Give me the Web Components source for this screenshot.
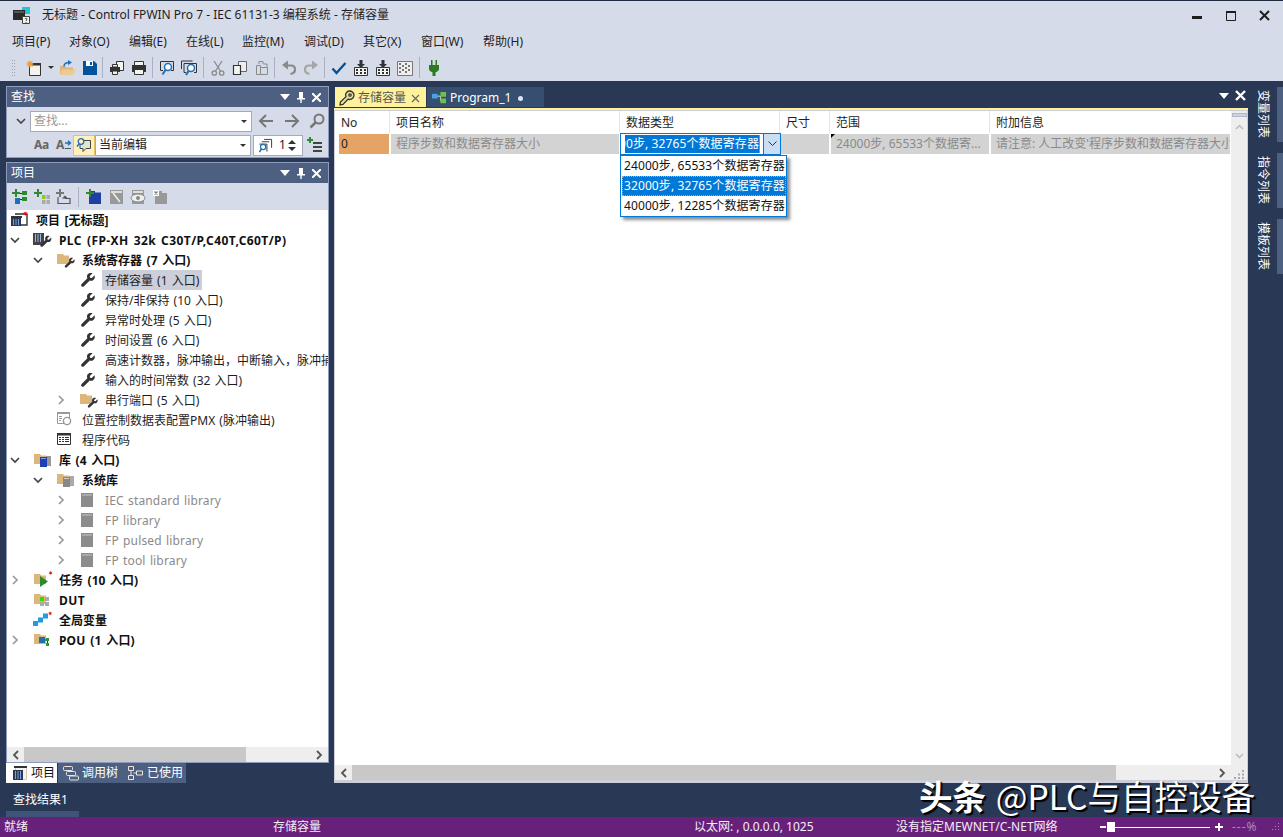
<!DOCTYPE html>
<html lang="zh">
<head>
<meta charset="utf-8">
<title>Control FPWIN Pro 7</title>
<style>
  html, body { margin: 0; padding: 0; }
  body {
    width: 1283px; height: 837px; overflow: hidden; background: #293955;
    display: grid; grid-template-rows: 30px 24px 27px 702px 34px 20px;
    font: 12px/1.2 "Noto Sans", "Noto Sans CJK SC", sans-serif; color: #1e1e1e;
  }
  fp-watermark b { font-weight: 700; margin-right: 2px; }
</style>
</head>
<body>
<fp-titlebar>无标题 - Control FPWIN Pro 7 - IEC 61131-3 编程系统 - 存储容量</fp-titlebar>
<fp-menubar></fp-menubar>
<fp-toolbar></fp-toolbar>
<fp-workspace>
  <fp-find-panel slot="left"></fp-find-panel>
  <fp-project-panel slot="left"></fp-project-panel>
  <fp-doc-well slot="doc"></fp-doc-well>
  <fp-side-rail slot="rail"></fp-side-rail>
</fp-workspace>
<fp-bottom-dock></fp-bottom-dock>
<fp-statusbar></fp-statusbar>
<fp-watermark><b>头条</b> @PLC与自控设备</fp-watermark>

<script>
const FOLDER = '<path fill="#dcb67a" d="M1 3h6l1 1.500h5V13H1z"/>';
const WRENCH = d => `<path fill="${d}" d="M14.500 3.200l-2.700 2.700-1.800-.2-.2-1.700 2.800-2.700C10.600.5 8.300 1 7.400 2.800c-.6 1.200-.5 2.500 0 3.400l-5.800 5.700c-.7.8-.7 1.800 0 2.400.7.7 1.700.7 2.400 0l5.800-5.700c1.200.4 2.600.3 3.600-.6 1.300-1 1.800-3.100 1.100-4.800z"/>`;
const SMALL_WRENCH = `<g transform="translate(8 6) scale(.72)">${WRENCH('#333')}</g>`;
const PLUS = '<path fill="#2d8a2d" d="M3 0h2v3h3v2H5v3H3V5H0V3h3z"/>';
const ICONS = {
  // tree
  project: '<path fill="none" stroke="#333" stroke-width="1.400" d="M4 3h12v11H9"/><path fill="#333" d="M0 5h11v2H0z"/><path fill="#293955" d="M0 7h10v8H0z"/><path stroke="#7f9fe0" d="M2.500 8v6M5 8v6M7.500 8v6"/><path fill="#e51400" d="M14 0l.6 1.600 1.600-.5-.9 1.400 1.200 1.100-1.700.1L14.500 5l-.8-1.300-1.700-.1 1.200-1.100-.9-1.400 1.600.5z"/>',
  plc: `<path fill="#444" d="M0 2h11v12H0z"/><path stroke="#9db4e8" d="M2.500 3v8M5 3v8M7.500 3v8"/><g transform="translate(6.500 4) scale(.8)">${WRENCH('#333')}</g>`,
  folderWrench: FOLDER + SMALL_WRENCH,
  wrench: WRENCH('#333'),
  pmx: '<path fill="none" stroke="#999" d="M1.500 1.500h12v11h-12z"/><path fill="#999" d="M1 1h13v2H1zM3 5h3v1H3zM3 7h3v1H3zM3 9h2v1H3z"/><circle cx="11" cy="10" r="3.600" fill="#fff" stroke="#999" stroke-width="1.400"/>',
  code: '<path fill="#fff" stroke="#333" d="M1.500 2.500h13v11h-13z"/><path fill="#333" d="M1 2h14v2.500H1zM3 6h2v1H3zM6 6h2v1H6zM9 6h4v1H9zM3 8h2v1H3zM6 8h2v1H6zM9 8h4v1H9zM3 10h2v1H3zM6 10h2v1H6zM9 10h4v1H9z"/>',
  libRoot: FOLDER + '<path fill="#999" d="M13 5h5v10h-5z"/><path fill="#1f3fb5" d="M7 6h7v10H7z"/><path fill="#7f9fe0" d="M8 7h5v1H8z"/>',
  libSys: FOLDER + '<path fill="#aaa" d="M13 5h5v10h-5z"/><path fill="#888" d="M7 6h7v10H7z"/><path fill="#ccc" d="M8 7h5v1H8z"/>',
  book: '<path fill="#8c8c8c" d="M1 1h12v14H1z"/><path fill="#c4c4c4" d="M2 2.500h10v1H2z"/>',
  task: FOLDER + '<path fill="#2d8a2d" d="M7 5l8 5.500-8 5.500z"/><path fill="#e51400" d="M17 0l.5 1.400 1.400-.4-.8 1.200 1 1-1.400.1-.4 1.300-.6-1.200-1.500-.1 1-1-.8-1.200 1.400.4z" transform="translate(.5 -.5)"/>',
  dut: FOLDER + '<path fill="#33dd00" d="M7 6h4v4H7z"/><path fill="#aaa" d="M12 6h4v4h-4zM7 11h4v4H7zM12 11h4v4h-4z"/>',
  global: '<path fill="#1f9be0" d="M0 10h5v5H0zM5 6.500h5v5H5zM10 2.500h5v5h-5z"/><path fill="#e51400" d="M17 0l.5 1.400 1.400-.4-.8 1.200 1 1-1.400.1-.4 1.300-.6-1.200-1.500-.1 1-1-.8-1.200 1.400.4z"/>',
  pou: FOLDER + '<path fill="#1f6fb5" d="M6 6h6v6H6z"/><path stroke="#333" fill="none" d="M12 9h2.500v5"/><path fill="#2d9a2d" d="M13 7h3v3h-3zM13 12h3v3h-3z"/>',
  // toolbar
  new: '<path fill="#f4f4ee" stroke="#333" d="M3.500 3.500h11v12h-11z"/><path fill="#333" d="M6 3h9v2.500H6z"/><path fill="#e8a33d" d="M4 0l.9 2 2-.9-.9 2 2 .9-2 .9.9 2-2-.9-.9 2-.9-2-2 .9.9-2-2-.9 2-.9-.9-2 2 .9z"/>',
  open: '<path fill="#dcb67a" d="M0 6h5l1 1.500h7V15H0z"/><path fill="#eacb95" d="M2 9.500h14L13.500 15H0z"/><path fill="none" stroke="#1f6fb5" stroke-width="1.500" d="M4 6.500C4 3.500 6 2.500 9 2.500"/><path fill="#1f6fb5" d="M8 0l4 2.500L8 5z"/>',
  save: '<path fill="#00539c" d="M1 1h11l3 3v11H1z"/><path fill="#fff" d="M4 1h7v5H4z"/><path fill="#00539c" d="M8 2h2v3H8z"/>',
  exportPrint: '<path fill="#f4f4ee" stroke="#333" d="M7.500 1.500h7v9h-7z"/><path fill="#333" d="M1 7h10v5H1z"/><path fill="#f4f4ee" stroke="#333" d="M3.500 4.500h5v2.500h-5zM3.500 11h5v3.500h-5z"/>',
  print: '<path fill="#f4f4ee" stroke="#333" d="M3.500 1.500h9v4h-9z"/><path fill="#333" d="M1 5h14v7H1z"/><path fill="#f4f4ee" stroke="#333" d="M3.500 9.500h9v5h-9z"/>',
  find: '<path fill="none" stroke="#333" d="M1.500 1.500h13v9H12M1.500 1.500v9H4"/><circle cx="9" cy="7" r="3.500" fill="#fff" stroke="#1f6fb5" stroke-width="1.500"/><path stroke="#1f6fb5" stroke-width="2" d="M6.500 10L3.500 14.500"/>',
  find2: '<path fill="none" stroke="#333" d="M.5 1h11M.5 1v8M3 3.500h12.500v9H13M3 3.500v9h2"/><circle cx="10" cy="8" r="3.500" fill="#fff" stroke="#1f6fb5" stroke-width="1.500"/><path stroke="#1f6fb5" stroke-width="2" d="M7.500 11L5 15"/>',
  cut: '<g fill="none" stroke="#8a8a8a" stroke-width="1.300"><path d="M4 1l6.500 10M12 1L5.500 11"/><circle cx="4.300" cy="13" r="2.200"/><circle cx="11.700" cy="13" r="2.200"/></g>',
  copy: '<path fill="#eee" stroke="#666" d="M6.500 1.500h8v10h-8z"/><path fill="#f4f4ee" stroke="#333" stroke-width="1.200" d="M1.500 5.500h7v9h-7z"/>',
  paste: '<path fill="none" stroke="#8a8a8a" d="M2.500 5.500h4v9h-4zM6.500 7.500h7v7h-7z"/><path fill="none" stroke="#8a8a8a" d="M5 4V1.500h4V4M9.500 4h3.500v3"/>',
  undo: '<path fill="none" stroke="#8a8a8a" stroke-width="2.200" d="M3.500 5.500h6.500c3 0 4 2 4 4 0 2.500-2 4-4.500 4.500"/><path fill="#8a8a8a" d="M7 .5v9L1 5z"/>',
  redo: '<path fill="none" stroke="#a5a5a5" stroke-width="2.200" d="M12.500 5.500H6c-3 0-4 2-4 4 0 2.500 2 4 4.500 4.500"/><path fill="#a5a5a5" d="M9 .5v9L15 5z"/>',
  check: '<path fill="none" stroke="#00539c" stroke-width="2.400" d="M1.500 8.500l4 4.500 9-10"/>',
  chipDown: '<path fill="#f4f4ee" stroke="#333" d="M1.500 7.500h13v8h-13z"/><path fill="#333" d="M3 9h2v2H3zM7 9h2v2H7zM11 9h2v2h-2zM3 12h2v2H3zM7 12h2v2H7zM11 12h2v2h-2zM6.500 0h3v4H12L8 8 4 4h2.500z"/>',
  chipGray: '<path fill="#eee" stroke="#777" d="M.5 1.500h15v14H.5z"/><g fill="#777"><path d="M2 3h2v2H2zM5 5h2v2H5zM8 3h2v2H8zM11 5h2v2h-2zM2 7h2v2H2zM8 7h2v2H8zM5 9h2v2H5zM11 9h2v2h-2zM2 11h2v2H2zM8 11h2v2H8z"/></g>',
  plug: '<path fill="#2d7a1f" d="M5 0h1.500v5H5zM9.500 0H11v5H9.500zM3 5h10v4c0 1.500-1.500 3-3.500 3.300V16h-3v-3.700C4.500 12 3 10.500 3 9z"/>',
  // find panel
  back: '<path fill="none" stroke="#777" stroke-width="2" d="M15 8H2M8 2L2 8l6 6"/>',
  forward: '<path fill="none" stroke="#777" stroke-width="2" d="M1 8h13M8 2l6 6-6 6"/>',
  mag: '<circle cx="10" cy="6" r="4.500" fill="none" stroke="#777" stroke-width="2"/><path stroke="#777" stroke-width="2.500" d="M6.500 9.500L1.500 14.500"/>',
  scope: '<path fill="#e3e6cf" stroke="#444" d="M4 3.500h10.500v8H10L7 14.500v-3H4z"/><circle cx="5" cy="4.500" r="2.800" fill="#fff0c0" stroke="#1f6fb5" stroke-width="1.300"/><path stroke="#1f6fb5" stroke-width="1.500" d="M3 7L1 9.500"/>',
  stack: '<path fill="none" stroke="#333" d="M6.500 1.500h8v9M4 4h8M1.500 6.500h8v8"/><circle cx="5.500" cy="9.500" r="2.800" fill="#fff" stroke="#1f6fb5" stroke-width="1.300"/><path stroke="#1f6fb5" stroke-width="1.600" d="M3.500 12L1.500 15"/>',
  addList: '<path fill="#2d8a2d" d="M2 0h2v2h2v2H4v2H2V4H0V2h2z"/><path fill="#444" d="M6 5h9v2H6zM6 9h9v2H6zM6 13h9v2H6z"/>',
  // project toolbar
  treeExpand: PLUS + '<path fill="#2d8a2d" d="M10 2h5v4h-5zM10 8h5v4h-5z"/><path fill="#1f6fb5" d="M3 9h5v6H3z"/><path fill="#333" d="M8 4h2v1H8zM8 10h2v1H8z"/>',
  treeAdd: PLUS + '<path fill="#88cc22" d="M8 6h3.500v4H8z"/><path fill="#aaa" d="M12.500 6H16v4h-3.500zM8 11h3.500v4H8zM12.500 11H16v4h-3.500z"/>',
  treeUp: '<path fill="#777" d="M3 0h2v3h3v2H5v3H3V5H0V3h3z"/><path fill="none" stroke="#555" stroke-width="1.200" d="M2 8v6.500h12V9.500H9"/><path fill="#555" d="M9 6.500l3 3H6z"/>',
  newDoc: '<path fill="#1f3fa5" d="M3 2h12v13H3z"/>' + PLUS + '<path fill="#d6dbe9" d="M9 2h6v1.500H9z"/>',
  grayEdit: '<path fill="#999" d="M2 1h13v14H2z"/><path fill="#ddd" d="M3 2h11v2H3z"/><path fill="none" stroke="#eee" stroke-width="1.500" d="M5 4l7 9"/>',
  grayEye: '<path fill="#999" d="M2 1h12v14H2z"/><path fill="#ddd" d="M3 2h10v2H3z"/><ellipse cx="8" cy="9" rx="7" ry="4" fill="#eee" stroke="#888"/><circle cx="8" cy="9" r="2" fill="#888"/>',
  grayDel: '<path fill="#999" d="M3 2h12v13H3z"/><path fill="#d6dbe9" d="M10 2h5v2h-5z"/><path fill="#fff" d="M1 1h6v6H1z"/><path stroke="#777" stroke-width="1.300" d="M2.500 2.500l3 3M5.500 2.500l-3 3"/>',
  // tabs
  tabProject: '<path fill="#f4f4ee" stroke="#d8c8bc" d="M3.500 1.500h11v13h-11z"/><path fill="#333" d="M2 1h13v2H2z"/><path fill="#293955" d="M1 5h10v10H1z"/><path stroke="#7f9fe0" d="M3.500 6v8M6 6v8M8.500 6v8"/>',
  tabCall: '<g fill="#4d6082" stroke="#eee4dc"><rect x=".5" y="1.500" width="9" height="4" rx="1"/><rect x="3.500" y="6.500" width="9" height="4" rx="1"/><rect x="6.500" y="11" width="9" height="4" rx="1"/></g>',
  tabUsed: '<g fill="#4d6082" stroke="#eee4dc"><path d="M1.500 1.500h5v4h-5zM1.500 10.500h5v4h-5zM9.500 6h6v4h-6z"/><path fill="none" d="M4 5.500v5M6.500 8h3"/></g>',
  key: '<g stroke="#333" stroke-width="1.300"><path fill="#e8e0a0" d="M10.500 1c2.500 0 4.500 2 4.500 4.200 0 2.300-2 4.300-4.300 4.300-.6 0-1.200-.2-1.600-.4L4 14.500l-3 .5.400-2.900 5.600-5.500c-.3-.6-.4-1.200-.4-1.800C6.600 3 8.400 1 10.500 1z"/><circle cx="11" cy="5" r="1.200" fill="#fff29d"/></g>',
  ladder: '<path fill="#4aa3e0" d="M0 3h6v5H0z"/><path fill="none" stroke="#ddd" d="M6 5.500h3M9 5.500v5"/><path fill="#6cc24a" d="M9 1h6v5H9zM9 8h6v5H9z"/>'
};

function defineEl(name, css, html) {
  customElements.define(name, class extends HTMLElement {
    connectedCallback() {
      if (this.shadowRoot) return;
      const root = this.attachShadow({ mode: 'open' });
      const body = typeof html === 'function' ? html(this) : html;
      root.innerHTML = `<style>${css}</style>${body}`;
    }
  });
}

// small svg icon, size in px
defineEl('fp-icon',
  `:host{display:inline-flex;flex:none;line-height:0}`,
  el => {
    const w = el.getAttribute('w') || 16, h = el.getAttribute('h') || w;
    const vb = el.getAttribute('vb') || '0 0 16 16';
    return `<svg width="${w}" height="${h}" viewBox="${vb}">${ICONS[el.getAttribute('name')] || ''}</svg>`;
  });

defineEl('fp-titlebar',
  `:host{display:flex;align-items:center;background:#d6dbe9;border-top:1px solid #1d2a3f;box-sizing:border-box;padding:0 1.500px 0 13px;color:#1e1e1e}
   .logo{width:17px;height:17px;margin-right:12px}
   .t{flex:1}
   .b{display:flex;align-items:center;width:34px;justify-content:center}
   svg{display:block}`,
  `<svg class="logo" viewBox="0 0 17 17"><path fill="#1cc7d8" d="M9 0h8v7H9z"/><path fill="#2a2a2a" d="M0 3h12v10H0z"/><path fill="#555" d="M1 4h10v2H1z"/><path fill="#f4f4ee" stroke="#444" d="M9.500 9.500h7v7h-7z"/><path stroke="#444" fill="none" d="M12 12c0-1 2-1 2 0s-1 1-1 2M13 15v1"/></svg>
   <span class="t"><slot></slot></span>
   <span class="b"><svg width="10" height="3" style="margin-top:3px"><path d="M0 0h10v3H0z" fill="#1e1e1e"/></svg></span>
   <span class="b"><svg width="10" height="10" viewBox="0 0 10 10"><path fill="none" stroke="#1e1e1e" d="M.5 .5h9v9h-9z"/><path fill="#1e1e1e" d="M0 0h10v2H0z"/></svg></span>
   <span class="b"><svg width="11" height="11"><path stroke="#1e1e1e" stroke-width="2" d="M1 1l9 9M10 1l-9 9"/></svg></span>`);

defineEl('fp-menubar',
  `:host{display:flex;align-items:center;background:#d6dbe9;padding:1px 0 0 12px;color:#1e1e1e}
   span{white-space:nowrap}`,
  [['项目(P)',57],['对象(O)',60],['编辑(E)',57],['在线(L)',56],['监控(M)',62],['调试(D)',59],['其它(X)',58],['窗口(W)',62],['帮助(H)',50]]
    .map(([t, w]) => `<span style="width:${w}px">${t}</span>`).join(''));

defineEl('fp-toolbar',
  `:host{display:flex;align-items:center;gap:6px;background:#d6dbe9;padding:0 0 0 11px}
   .grip{width:5px;height:18px;margin-right:4px;background-image:radial-gradient(#8c94a8 .7px,transparent .8px);background-size:2.500px 3px}
   .s{width:1px;height:21px;background:#aab0c2}
   .a{width:6px;height:10px;display:flex;align-items:center}
   .a::before{content:"";border:3px solid transparent;border-top:3px solid #333;border-bottom:0}`,
  (() => {
    const i = n => `<fp-icon name="${n}"></fp-icon>`;
    const s = m => `<span class="s" style="margin-left:${m}px"></span>`;
    return `<span class="grip"></span>${i('new')}<span class="a"></span>${i('open')}${i('save')}${s(-2)}${i('exportPrint')}${i('print')}${s(-1)}${i('find')}${i('find2')}${s(0)}${i('cut')}${i('copy')}${i('paste')}${s(-2)}${i('undo')}${i('redo')}${s(-1)}${i('check')}${i('chipDown')}${i('chipDown')}${i('chipGray')}${s(0)}${i('plug')}`;
  })());

defineEl('fp-workspace',
  `:host{display:grid;grid-template-columns:334px 914px 35px;min-height:0}
   .left{display:flex;flex-direction:column;gap:4px;padding:5px 5px 0 6px;min-height:0;height:100%;box-sizing:border-box}
   .doc,.rail{min-height:0;height:100%;box-sizing:border-box;display:flex;flex-direction:column}`,
  `<div class="left"><slot name="left"></slot></div><div class="doc"><slot name="doc"></slot></div><div class="rail"><slot name="rail"></slot></div>`);

// title bar of a tool window
defineEl('fp-panel-head',
  `:host{display:flex;align-items:center;height:20px;background:#4d6082;color:#fff;padding:0 7px 0 4px;flex:none}
   .t{flex:1}
   svg{display:block}
   .i{margin-left:7px}`,
  `<span class="t"><slot></slot></span>
   <svg class="i" width="10" height="6"><path fill="#fff" d="M0 0h10L5 6z"/></svg>
   <svg class="i" width="8" height="11"><path fill="#fff" d="M2 0h4v6h2v1.500H4.700V11H3.300V7.500H0V6h2z"/></svg>
   <svg class="i" width="9" height="9"><path stroke="#fff" stroke-width="2" d="M0 0l9 9M9 0L0 9"/></svg>`);

defineEl('fp-find-panel',
  `:host{display:flex;flex-direction:column;height:72px;flex:none;border:1px solid #8e9bbc;box-sizing:border-box;background:#d6dbe9}
   .row{display:flex;align-items:center;height:22px;position:relative}
   .r1{margin-top:3px}
   .r2{margin-top:2px}
   .chev{width:12px;margin-left:8px;margin-right:3px}
   .box{background:#fff;border:1px solid #a4a9bb;box-sizing:border-box;height:21px;display:flex;align-items:center;padding-left:3px}
   .box .tx{flex:1}
   .drop{border:3px solid transparent;border-top:3px solid #333;border-bottom:0;margin-right:4px}
   .ph{color:#999}
   .aa{font-weight:700;color:#666;font-size:12px;width:22px;text-align:left;letter-spacing:-.3px;display:flex;align-items:center}
   .scope{width:22px;height:21px;background:#fff0c0;border:1px solid #e5c365;box-sizing:border-box;display:flex;align-items:center;justify-content:center}
   .spin{width:50px;background:#fff;border:1px solid #a4a9bb;box-sizing:border-box;height:21px;display:flex;align-items:center;padding-left:4px;margin-left:2px}
   svg{display:block}`,
  `<fp-panel-head>查找</fp-panel-head>
   <div class="row r1">
     <svg class="chev" width="10" height="6" viewBox="0 0 10 6"><path fill="none" stroke="#444" stroke-width="1.600" d="M1 1l4 4 4-4"/></svg>
     <div class="box" style="width:222px"><span class="tx ph">查找...</span><span class="drop"></span></div>
     <fp-icon name="back" style="margin-left:6px"></fp-icon>
     <fp-icon name="forward" style="margin-left:10px"></fp-icon>
     <fp-icon name="mag" style="margin-left:9px"></fp-icon>
   </div>
   <div class="row r2">
     <span class="aa" style="margin-left:27px">Aa</span>
     <span class="aa" style="margin-right:-4px">A<svg width="7" height="10" style="margin-left:1px"><path fill="none" stroke="#1f6fb5" stroke-width="1.300" d="M0 3h5M3 .8L5.500 3 3 5.200"/><path stroke="#555" d="M0 8.500h6"/></svg></span>
     <span class="scope" style="margin-left:-1px"><fp-icon name="scope"></fp-icon></span>
     <div class="box" style="width:156px"><span class="tx">当前编辑</span><span class="drop"></span></div>
     <div class="spin"><fp-icon name="stack" w="15"></fp-icon><span style="margin-left:6px;flex:1">1</span>
       <svg width="8" height="13" style="margin-right:6px"><path fill="#333" d="M0 5l4-4 4 4zM0 8l4 4 4-4z"/></svg></div>
     <fp-icon name="addList" style="margin-left:4px"></fp-icon>
   </div>`);

defineEl('fp-tree-row',
  `:host{display:flex;align-items:center;height:20px;white-space:nowrap;flex:none}
   .c{width:16px;flex:none;display:flex;justify-content:center}
   .l{padding:3px 3px 1px;line-height:16px;word-spacing:1px}
   :host([bold]) .l{font-weight:700;color:#111;word-spacing:1.500px}
   :host([gray]) .l{color:#8a8a8a;letter-spacing:.15px}
   :host([sel]) .l{background:#ccced9}
   svg{display:block}`,
  el => {
    const lv = +el.getAttribute('level');
    const chev = el.getAttribute('chev');
    const icon = el.getAttribute('icon');
    const ls = el.getAttribute('ls');
    const iw = icon === 'wrench' || icon === 'book' ? 16 : 20;
    const vb = iw === 20 ? '0 0 20 18' : '0 0 16 16';
    const ih = iw === 20 ? 18 : 16;
    const chevSvg = chev === 'open'
      ? '<svg width="10" height="7"><path fill="none" stroke="#444" stroke-width="1.700" d="M1 1l4 4 4-4"/></svg>'
      : chev === 'closed'
      ? '<svg width="7" height="10"><path fill="none" stroke="#999" stroke-width="1.700" d="M1 1l4 4-4 4"/></svg>' : '';
    const pad = lv === 0 ? 4 : 23 * lv - 23;
    const iconMl = lv === 0 ? 0 : (iw === 20 ? 10 : 11);
    const lblMl = lv === 0 ? 2 : (iw === 20 ? 3 : 6);
    return `<span style="width:${pad}px;flex:none"></span>` +
      (lv === 0 ? '' : `<span class="c">${chevSvg}</span>`) +
      `<fp-icon name="${icon}" w="${iw}" h="${ih}" vb="${vb}" style="margin-left:${iconMl}px"></fp-icon>` +
      `<span class="l" style="margin-left:${lblMl}px${ls ? ';letter-spacing:' + ls + 'px' : ''}"><slot></slot></span>`;
  });

defineEl('fp-hscroll',
  `:host{display:flex;align-items:center;height:15px;background:#eeeeef;flex:none}
   .th{background:#c8c8c8;height:100%}
   .sp{flex:1}
   svg{display:block;flex:none}`,
  el => {
    const w = el.getAttribute('thumb');
    return `<span style="width:17px;flex:none;display:flex;justify-content:center"><svg width="7" height="10"><path fill="none" stroke="#555" stroke-width="1.800" d="M6 1L2 5l4 4"/></svg></span>
    <span class="th" style="width:${w}px"></span><span class="sp"></span>
    <span style="width:17px;flex:none;display:flex;justify-content:center"><svg width="7" height="10"><path fill="none" stroke="#555" stroke-width="1.800" d="M1 1l4 4-4 4"/></svg></span>`;
  });

defineEl('fp-project-panel',
  `:host{display:flex;flex-direction:column;flex:1;min-height:0}
   .frame{flex:1;display:flex;flex-direction:column;border:1px solid #8e9bbc;min-height:0;background:#fff}
   .tb{display:flex;align-items:center;gap:6px;height:27px;background:#d6dbe9;padding-left:5px;flex:none}
   .s{width:1px;height:20px;background:#aab0c2;margin:0 1px 0 0}
   .tree{flex:1;display:flex;flex-direction:column;overflow:hidden;min-height:0;color:#1e1e1e}
   .tabs{display:flex;height:20px;flex:none}
   .tab{display:flex;align-items:center;height:20px;box-sizing:border-box;background:#4d6082;color:#fff;white-space:nowrap}
   .on{background:#fff;color:#111;margin-right:1px;width:51px}`,
  `<div class="frame">
     <fp-panel-head>项目</fp-panel-head>
     <div class="tb">
       <fp-icon name="treeExpand"></fp-icon><fp-icon name="treeAdd"></fp-icon><fp-icon name="treeUp"></fp-icon>
       <span class="s"></span>
       <fp-icon name="newDoc"></fp-icon><fp-icon name="grayEdit"></fp-icon><fp-icon name="grayEye"></fp-icon><fp-icon name="grayDel"></fp-icon>
     </div>
     <div class="tree">
       <fp-tree-row level="0" icon="project" bold>项目 [无标题]</fp-tree-row>
       <fp-tree-row level="1" chev="open" icon="plc" bold ls=".42">PLC (FP-XH 32k C30T/P,C40T,C60T/P)</fp-tree-row>
       <fp-tree-row level="2" chev="open" icon="folderWrench" bold>系统寄存器 (7 入口)</fp-tree-row>
       <fp-tree-row level="3" icon="wrench" sel>存储容量 (1 入口)</fp-tree-row>
       <fp-tree-row level="3" icon="wrench">保持/非保持 (10 入口)</fp-tree-row>
       <fp-tree-row level="3" icon="wrench">异常时处理 (5 入口)</fp-tree-row>
       <fp-tree-row level="3" icon="wrench">时间设置 (6 入口)</fp-tree-row>
       <fp-tree-row level="3" icon="wrench">高速计数器，脉冲输出，中断输入，脉冲捕捉输入设置</fp-tree-row>
       <fp-tree-row level="3" icon="wrench">输入的时间常数 (32 入口)</fp-tree-row>
       <fp-tree-row level="3" chev="closed" icon="folderWrench">串行端口 (5 入口)</fp-tree-row>
       <fp-tree-row level="2" icon="pmx">位置控制数据表配置PMX (脉冲输出)</fp-tree-row>
       <fp-tree-row level="2" icon="code">程序代码</fp-tree-row>
       <fp-tree-row level="1" chev="open" icon="libRoot" bold>库 (4 入口)</fp-tree-row>
       <fp-tree-row level="2" chev="open" icon="libSys" bold>系统库</fp-tree-row>
       <fp-tree-row level="3" chev="closed" icon="book" gray>IEC standard library</fp-tree-row>
       <fp-tree-row level="3" chev="closed" icon="book" gray>FP library</fp-tree-row>
       <fp-tree-row level="3" chev="closed" icon="book" gray>FP pulsed library</fp-tree-row>
       <fp-tree-row level="3" chev="closed" icon="book" gray>FP tool library</fp-tree-row>
       <fp-tree-row level="1" chev="closed" icon="task" bold>任务 (10 入口)</fp-tree-row>
       <fp-tree-row level="1" icon="dut" bold ls=".5">DUT</fp-tree-row>
       <fp-tree-row level="1" icon="global" bold>全局变量</fp-tree-row>
       <fp-tree-row level="1" chev="closed" icon="pou" bold ls=".15">POU (1 入口)</fp-tree-row>
     </div>
     <fp-hscroll thumb="222"></fp-hscroll>
   </div>
   <div class="tabs">
     <span class="tab on" style="padding-left:6px"><fp-icon name="tabProject" style="margin-right:3px"></fp-icon>项目</span>
     <span class="tab" style="width:62px;padding-left:5px"><fp-icon name="tabCall" style="margin-right:3px"></fp-icon>调用树</span>
     <span class="tab" style="width:66px;padding-left:7px"><fp-icon name="tabUsed" style="margin-right:4px"></fp-icon>已使用</span>
   </div>`);

defineEl('fp-data-table',
  `:host{display:block;position:relative;flex:1;min-width:0;overflow:visible;background:#fff}
   .g{display:grid;grid-template-columns:55px 230px 160px 50px 160px 240px}
   .h{height:22px;display:flex;align-items:center;padding:3px 0 0 6px;border-right:1px solid #e4e4e4;box-sizing:border-box;color:#1e1e1e}
   .c{height:20px;margin-top:1px;background:#d3d3d3;color:#8a8a8a;display:flex;align-items:center;padding:1px 0 0 5px;margin-right:1px;overflow:hidden;white-space:nowrap;position:relative;box-sizing:border-box}
   .no{background:#e5a465;color:#1e1e1e;margin-left:4px;padding-left:2px}
   .tri{position:absolute;left:0;top:0;width:0;height:0;border:2.500px solid #000;border-right-color:transparent;border-bottom-color:transparent}
   .edit{position:absolute;left:285px;top:22px;width:161px;height:22px;box-sizing:border-box;border:1px solid #0078d7;display:flex;background:#fff}
   .val{width:135px;margin:1px 0 1px 4px;padding-top:1px;background:#0078d7;color:#fff;overflow:hidden;white-space:nowrap;display:flex;justify-content:flex-end;align-items:center;border-right:1px solid #e5801a;box-sizing:border-box;letter-spacing:.1px}
   .btn{margin-left:3px;flex:1;background:#c9def5;border-left:1px solid #0078d7;display:flex;align-items:center;justify-content:center}
   .list{position:absolute;left:285px;top:44px;width:167px;height:62px;box-sizing:border-box;border:1px solid #0078d7;background:#fff;box-shadow:3px 3px 3px rgba(0,0,0,.45);z-index:3}
   .it{height:20px;box-sizing:border-box;display:flex;align-items:center;padding:1px 0 0 3px;white-space:nowrap;color:#111;overflow:hidden;letter-spacing:.1px}
   .it.sel{background:#0078d7;color:#fff;outline:1px dotted #f0a040;outline-offset:-1px;margin-left:1px;padding-left:2px}
   svg{display:block}`,
  `<div class="g">
     <span class="h">No</span><span class="h">项目名称</span><span class="h">数据类型</span><span class="h">尺寸</span><span class="h">范围</span><span class="h" style="border:0">附加信息</span>
     <span class="c no">0</span><span class="c" style="margin-left:1px">程序步数和数据寄存器大小</span><span class="c"></span><span class="c"></span>
     <span class="c" style="margin-left:1px"><span class="tri"></span>24000步, 65533个数据寄...</span>
     <span class="c" style="margin-left:1px;margin-right:0">请注意: 人工改变'程序步数和数据寄存器大小'的值将导致程序</span>
   </div>
   <div class="edit"><span class="val">32000步, 32765个数据寄存器</span>
     <span class="btn"><svg width="9" height="6"><path fill="none" stroke="#333" d="M.5 .5l4 4 4-4"/></svg></span></div>
   <div class="list">
     <div class="it">24000步, 65533个数据寄存器</div>
     <div class="it sel">32000步, 32765个数据寄存器</div>
     <div class="it">40000步, 12285个数据寄存器</div>
   </div>`);

defineEl('fp-doc-well',
  `:host{display:flex;flex-direction:column;height:702px}
   .tabs{display:flex;align-items:flex-start;height:21px;margin-top:6px;padding-left:1px;flex:none;position:relative}
   .tab{display:flex;align-items:center;height:20px;box-sizing:border-box;padding-top:2px}
   .on{width:91px;background:#fff29d;color:#555;padding-left:4px}
   .on .x{margin-left:5px}
   .off{width:117px;background:#364e6f;color:#fff;padding-left:5px;margin-left:1px}
   .dot{width:5px;height:5px;border-radius:50%;background:#dfe6f2;margin-left:7px}
   .ctl{position:absolute;right:2px;top:3px;display:flex;align-items:center;gap:6px}
   .well{flex:1;display:flex;flex-direction:column;min-height:0;border-top:2px solid #fff29d;background:#fff;box-sizing:border-box;position:relative}
   .in{flex:1;display:flex;flex-direction:column;min-height:0;border:1px solid #ccced9;border-width:1px 1px 3px 1px}
   .mid{flex:1;display:flex;min-height:0}
   .vs{width:16px;flex:none;background:#eeeeef;display:flex;flex-direction:column;align-items:center}
   .split{width:15px;height:4px;margin-top:2px;background:#ccd2e4;border:1px solid #b0b8cc;box-sizing:border-box}
   .bot{display:flex;flex:none}
   .grip{width:16px;background:#eeeeef;display:flex;align-items:flex-end;justify-content:center;padding-bottom:1px;box-sizing:border-box}
   fp-hscroll{flex:1}
   svg{display:block}`,
  `<div class="tabs">
     <span class="tab on"><fp-icon name="key" w="16"></fp-icon><span style="margin-left:3px">存储容量</span><svg class="x" width="9" height="9"><path stroke="#666" stroke-width="1.200" d="M1 1l7 7M8 1L1 8"/></svg></span>
     <span class="tab off"><fp-icon name="ladder" w="15"></fp-icon><span style="margin-left:3px">Program_1</span><span class="dot"></span></span>
     <span class="ctl"><svg width="10" height="6"><path fill="#fff" d="M0 0h10L5 6z"/></svg><svg width="11" height="11"><path stroke="#fff" stroke-width="2.400" d="M1 1l9 9M10 1l-9 9"/></svg></span>
   </div>
   <div class="well"><div class="in">
     <div class="mid">
       <fp-data-table></fp-data-table>
       <div class="vs"><span class="split"></span>
         <svg width="9" height="6" style="margin-top:7px"><path fill="none" stroke="#bbb" stroke-width="1.500" d="M1 5l3.500-3.500L8 5"/></svg>
         <span style="flex:1"></span>
         <svg width="9" height="6" style="margin-bottom:6px"><path fill="none" stroke="#bbb" stroke-width="1.500" d="M1 1l3.500 3.500L8 1"/></svg>
       </div>
     </div>
     <div class="bot">
       <fp-hscroll thumb="764"></fp-hscroll>
       <span class="grip"><svg width="11" height="9"><g fill="#aaa"><path d="M8 0h2v2H8zM4 3.500h2v2H4zM8 3.500h2v2H8zM0 7h2v2H0zM4 7h2v2H4zM8 7h2v2H8z"/></g></svg></span>
     </div>
   </div></div>`);

defineEl('fp-side-rail',
  `:host{display:flex;flex-direction:column;gap:11px;padding-top:6px;height:100%;box-sizing:border-box;align-items:flex-end}
   .t{height:55px;width:35px;box-sizing:border-box;border-right:6px solid #4d6082;color:#fff;writing-mode:vertical-rl;text-orientation:sideways;display:flex;align-items:center;justify-content:center}`,
  `<div class="t"><span>变量列表</span></div><div class="t"><span>指令列表</span></div><div class="t"><span>模板列表</span></div>`);

defineEl('fp-bottom-dock',
  `:host{display:flex;flex-direction:column;justify-content:flex-end;padding-left:6px;color:#fff}
   .t{padding:0 0 4px 7px}
   .u{width:73px;height:6px;background:#3e5478}`,
  `<div class="t">查找结果1</div><div class="u"></div>`);

defineEl('fp-statusbar',
  `:host{display:grid;grid-template-columns:269px 421px 202px 204px 132px 40px auto;align-items:center;background:#68217a;color:#f4ecf7;padding-left:4px;white-space:nowrap}
   .z{display:flex;align-items:center;height:12px;position:relative}
   .line{width:102px;height:1px;background:#fff;margin:0 5px 0 2px}
   .m{width:6px;height:2px;background:#fff}
   .p{width:8px;height:8px;background:linear-gradient(#fff,#fff) center/8px 2px no-repeat,linear-gradient(#fff,#fff) center/2px 8px no-repeat}
   .th{position:absolute;left:7px;top:1px;width:8px;height:10px;background:#fff}
   .pc{color:#a68ab4;letter-spacing:1px}
   svg{display:block}`,
  `<span>就绪</span><span>存储容量</span><span>以太网: , 0.0.0.0, 1025</span><span>没有指定MEWNET/C-NET网络</span>
   <span class="z"><span class="m"></span><span class="line"></span><span class="p"></span><span class="th"></span></span>
   <span class="pc">---%</span>
   <svg width="8" height="8"><g fill="#a68ab4"><path d="M6 0h1v1H6zM3 3h1v1H3zM6 3h1v1H6zM0 6h1v1H0zM3 6h1v1H3zM6 6h1v1H6z"/></g></svg>`);

// lies over the window: the site's stamp burnt into the screenshot
defineEl('fp-watermark',
  `:host{position:absolute;left:919px;top:775px;color:#fff;font:400 33.600px/42px "Noto Sans CJK SC","Noto Sans",sans-serif;text-shadow:2px 2px 1px #000,1px 1px 0 #000;white-space:nowrap;z-index:9}`,
  `<slot></slot>`);
</script>
</body>
</html>
